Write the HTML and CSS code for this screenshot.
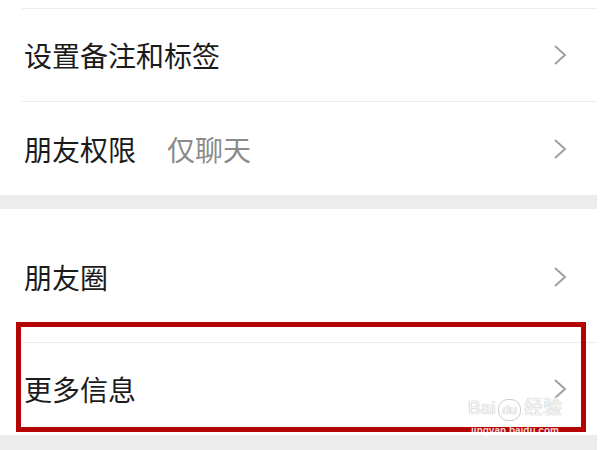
FILE: index.html
```html
<!DOCTYPE html>
<html lang="zh-CN">
<head>
    <meta charset="UTF-8">
    <meta name="viewport" content="width=device-width, initial-scale=1.0">
    <title>资料设置</title>
    <link rel="stylesheet" href="styles.css">
</head>
<body>
    <div class="page">
        <!-- 第一组 -->
        <div class="group group-top">
            <div class="row">
                <span class="label">设置备注和标签</span>
                <svg class="arrow" width="15" height="22" viewBox="0 0 15 22"><polyline points="2,2 12,11 2,20" /></svg>
            </div>
            <div class="row row-tall">
                <span class="label">朋友权限</span>
                <span class="value">仅聊天</span>
                <svg class="arrow" width="15" height="22" viewBox="0 0 15 22"><polyline points="2,2 12,11 2,20" /></svg>
            </div>
        </div>

        <div class="gap"></div>

        <!-- 第二组 -->
        <div class="group">
            <div class="row row-moments">
                <span class="label">朋友圈</span>
                <svg class="arrow" width="15" height="22" viewBox="0 0 15 22"><polyline points="2,2 12,11 2,20" /></svg>
            </div>
            <div class="row">
                <span class="label">更多信息</span>
                <svg class="arrow" width="15" height="22" viewBox="0 0 15 22"><polyline points="2,2 12,11 2,20" /></svg>
            </div>
        </div>

        <div class="gap gap-bottom"></div>

        <!-- 红框标注 -->
        <div class="highlight"></div>

        <!-- 水印 -->
        <div class="watermark">
            <span class="wm-logo">Bai<span class="wm-paw">du</span>经验</span>
            <span class="wm-url">jingyan.baidu.com</span>
        </div>
    </div>
</body>
</html>
```

FILE: styles.css
```css
/* 页面基础 */
body {
    margin: 0;
    background: #fff;
    font-family: "Noto Sans CJK SC", "Noto Sans", sans-serif;
    color: #1b1b1b;
}

.page {
    position: relative;
    width: 597px;
    height: 450px;
    overflow: hidden;
    background: #fff;
}

/* 分组 */
.group {
    background: #fff;
}

.group-top {
    padding-top: 8px;
}

/* 列表行 */
.row {
    display: flex;
    align-items: center;
    margin-left: 22px;
    padding-left: 2px;
    padding-right: 29px;
    height: 92px;
    border-top: 1px solid #ececec;
}

.row-tall {
    height: 93px;
}

.row-moments {
    height: 133px;
    border-top: none;
    padding-top: 3px;
    box-sizing: border-box;
}

.label {
    font-size: 28px;
    line-height: 1;
}

.value {
    font-size: 28px;
    line-height: 1;
    color: #8a8a8a;
    margin-left: 31px;
}

.arrow {
    margin-left: auto;
    fill: none;
    stroke: #a0a0a0;
    stroke-width: 2;
}

/* 分隔带 */
.gap {
    height: 14px;
    background: #ececec;
}

.gap-bottom {
    height: 15px;
}

/* 红框 */
.highlight {
    position: absolute;
    left: 16px;
    top: 322px;
    width: 560px;
    height: 100px;
    border: 5px solid #b50404;
}

/* 水印 */
.watermark {
    position: absolute;
    left: 460px;
    top: 398px;
    width: 110px;
    display: flex;
    flex-direction: column;
    align-items: center;
    font-family: "Liberation Sans", "Noto Sans CJK SC", sans-serif;
}

.wm-logo {
    font-size: 19px;
    line-height: 20px;
    color: rgba(255, 255, 255, 0.9);
    text-shadow: 0 0 1px #bbb, 0 0 1px #bbb;
}

.wm-paw {
    display: inline-block;
    font-size: 13px;
    line-height: 20px;
    padding: 0 3px;
    margin: 0 3px;
    border-radius: 10px;
    border: 1px solid #ccc;
}

.wm-url {
    font-size: 10px;
    line-height: 12px;
    font-weight: bold;
    color: rgba(255, 255, 255, 0.85);
    margin-top: 4px;
}
```
